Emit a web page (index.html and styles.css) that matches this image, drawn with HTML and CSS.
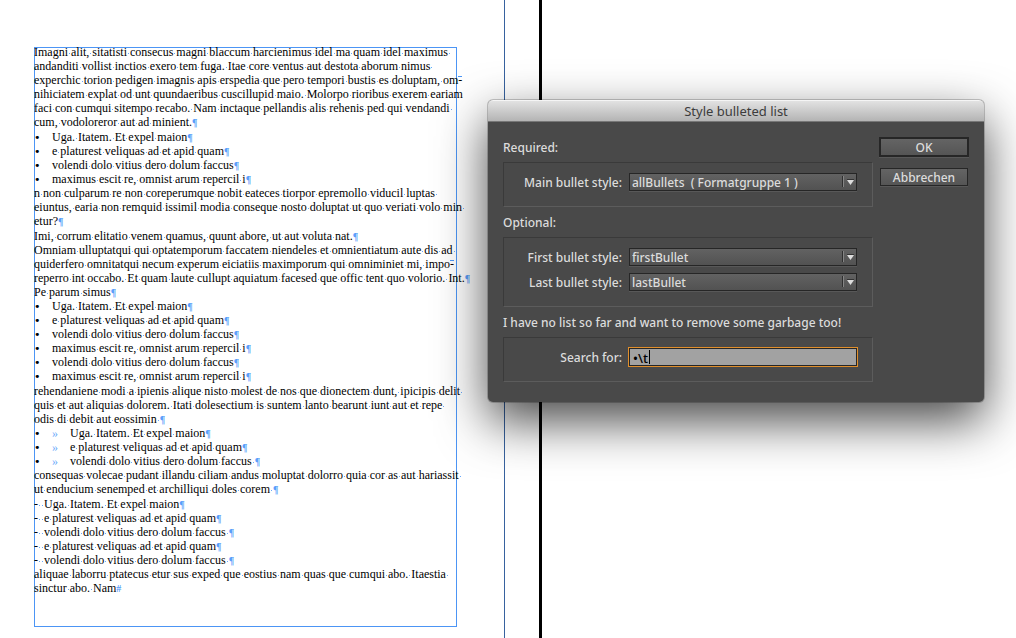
FILE: index.html
```html
<!DOCTYPE html>
<html lang="en">
<head>
<meta charset="utf-8">
<title>Style bulleted list</title>
<link rel="stylesheet" href="styles.css">
</head>
<body>
<main class="pasteboard">
<div class="page">
<article class="frame">
<section>
<p><span class="line">Imagni alit, sitatisti consecus magni blaccum harcienimus idel ma quam idel maximus </span>
<span class="line">andanditi vollist inctios exero tem fuga. Itae core ventus aut destota aborum nimus </span>
<span class="line">experchic torion pedigen imagnis apis erspedia que pero tempori bustis es doluptam, om<i class="hyphen">-</i></span>
<span class="line">nihiciatem explat od unt quundaeribus cuscillupid maio. Molorpo rioribus exerem eariam</span>
<span class="line">faci con cumqui sitempo recabo. Nam inctaque pellandis alis rehenis ped qui vendandi </span>
<span class="line">cum, vodoloreror aut ad minient.<b class="mark">¶</b></span></p>
</section>
<section>
<ul>
<li><span class="tab bullet">•</span>Uga. Itatem. Et expel maion<b class="mark">¶</b></li>
<li><span class="tab bullet">•</span>e platurest veliquas ad et apid quam<b class="mark">¶</b></li>
<li><span class="tab bullet">•</span>volendi dolo vitius dero dolum faccus<b class="mark">¶</b></li>
<li><span class="tab bullet">•</span>maximus escit re, omnist arum repercil i<b class="mark">¶</b></li>
</ul>
<p><span class="line">n non culparum re non coreperumque nobit eateces tiorpor epremollo viducil luptas </span>
<span class="line">eiuntus, earia non remquid issimil modia conseque nosto doluptat ut quo veriati volo min </span>
<span class="line">etur?<b class="mark">¶</b></span></p>
</section>
<section>
<p><span class="line">Imi, corrum elitatio venem quamus, quunt abore, ut aut voluta nat.<b class="mark">¶</b></span></p>
<p><span class="line">Omniam ulluptatqui qui optatemporum faccatem niendeles et omnientiatum aute dis ad </span>
<span class="line">quiderfero omnitatqui necum experum eiciatiis maximporum qui omniminiet mi, impo<i class="hyphen">-</i></span>
<span class="line">reperro int occabo. Et quam laute cullupt aquiatum facesed que offic tent quo volorio. Int.<b class="mark">¶</b></span></p>
<p><span class="line">Pe parum simus<b class="mark">¶</b></span></p>
<ul>
<li><span class="tab bullet">•</span>Uga. Itatem. Et expel maion<b class="mark">¶</b></li>
<li><span class="tab bullet">•</span>e platurest veliquas ad et apid quam<b class="mark">¶</b></li>
<li><span class="tab bullet">•</span>volendi dolo vitius dero dolum faccus<b class="mark">¶</b></li>
<li><span class="tab bullet">•</span>maximus escit re, omnist arum repercil i<b class="mark">¶</b></li>
<li><span class="tab bullet">•</span>volendi dolo vitius dero dolum faccus<b class="mark">¶</b></li>
<li><span class="tab bullet">•</span>maximus escit re, omnist arum repercil i<b class="mark">¶</b></li>
</ul>
</section>
<section>
<p><span class="line">rehendaniene modi a ipienis alique nisto molest de nos que dionectem dunt, ipicipis delit </span>
<span class="line">quis et aut aliquias dolorem. Itati dolesectium is suntem lanto bearunt iunt aut et repe </span>
<span class="line">odis di debit aut eossimin <b class="mark">¶</b></span></p>
<ul>
<li><span class="tab bullet">•</span><span class="tab arrows">»</span>Uga. Itatem. Et expel maion<b class="mark">¶</b></li>
<li><span class="tab bullet">•</span><span class="tab arrows">»</span>e platurest veliquas ad et apid quam<b class="mark">¶</b></li>
<li><span class="tab bullet">•</span><span class="tab arrows">»</span>volendi dolo vitius dero dolum faccus <b class="mark">¶</b></li>
</ul>
<p><span class="line">consequas volecae pudant illandu ciliam andus moluptat dolorro quia cor as aut hariassit </span>
<span class="line">ut enducium senemped et archilliqui doles corem <b class="mark">¶</b></span></p>
</section>
<section>
<ul>
<li>-  Uga. Itatem. Et expel maion<b class="mark">¶</b></li>
<li>-  e platurest veliquas ad et apid quam<b class="mark">¶</b></li>
<li>-  volendi dolo vitius dero dolum faccus <b class="mark">¶</b></li>
<li>-  e platurest veliquas ad et apid quam<b class="mark">¶</b></li>
<li>-  volendi dolo vitius dero dolum faccus <b class="mark">¶</b></li>
</ul>
<p><span class="line">aliquae laborru ptatecus etur sus exped que eostius nam quas que cumqui abo. Itaestia </span>
<span class="line">sinctur abo. Nam<b class="mark">#</b></span></p>
</section>
</article>
</div>
<div class="bleed"></div>

<form class="dialog" role="dialog" aria-labelledby="dialog-title">
<h1 class="titlebar" id="dialog-title">Style bulleted list</h1>
<div class="body">
<div class="settings">
<h2 class="heading">Required:</h2>
<div class="group">
<label for="main">Main bullet style:</label>
<span class="dropdown"><select id="main"><option>allBullets&nbsp; ( Formatgruppe 1 )</option></select><svg class="arrow" viewBox="0 0 14 12" aria-hidden="true"><path d="M.5 0v11" stroke="#303030"/><path d="M1.5 0v11" stroke="#858585"/><path d="M5 4h7L8.500 9z" fill="#ddd"/><path d="M5 3.500h7" stroke="#333"/></svg></span>
</div>
<h2 class="heading">Optional:</h2>
<div class="group">
<label for="first">First bullet style:</label>
<span class="dropdown"><select id="first"><option>firstBullet</option></select><svg class="arrow" viewBox="0 0 14 12" aria-hidden="true"><path d="M.5 0v11" stroke="#303030"/><path d="M1.5 0v11" stroke="#858585"/><path d="M5 4h7L8.500 9z" fill="#ddd"/><path d="M5 3.500h7" stroke="#333"/></svg></span>
<label for="last">Last bullet style:</label>
<span class="dropdown"><select id="last"><option>lastBullet</option></select><svg class="arrow" viewBox="0 0 14 12" aria-hidden="true"><path d="M.5 0v11" stroke="#303030"/><path d="M1.5 0v11" stroke="#858585"/><path d="M5 4h7L8.500 9z" fill="#ddd"/><path d="M5 3.500h7" stroke="#333"/></svg></span>
</div>
<h2 class="heading">I have no list so far and want to remove some garbage too!</h2>
<div class="group">
<label for="search">Search for:</label>
<span class="search"><input id="search" type="text" value="•\t"><span class="caret"></span></span>
</div>
</div>
<div class="actions">
<button class="default" type="button">OK</button>
<button type="button">Abbrechen</button>
</div>
</div>
</form>
</main>
<script src="script.js"></script>
</body>
</html>
```
FILE: styles.css
```css
* { box-sizing: border-box; }

body {
  margin: 0;
  background: #fff;
}

.pasteboard {
  position: relative;
  display: flex;
  min-height: 100vh;
  overflow: hidden;
}

.page {
  flex: none;
  padding: 47px 47px 11px 34px;
  border-right: 1px solid #37629f;
}

.bleed {
  flex: none;
  width: 37px;
  border-right: 3px solid #000;
}

/* Text frame */
.frame {
  display: flex;
  flex-direction: column;
  gap: 1px;
  width: 423px;
  min-height: 580px;
  box-shadow: inset 0 0 0 1px #4c95f5;
  color: #000;
  font: 12px/14px "Liberation Serif", serif;
}

.frame section:first-child { margin-top: -2px; }

.frame p,
.frame ul {
  margin: 0;
  padding: 0;
  list-style: none;
}

.frame .line,
.frame li {
  display: block;
  height: 14px;
  white-space: pre;
}

.tab {
  display: inline-block;
  width: 18px;
}

.bullet {
  font: 11px/1 "DejaVu Sans", sans-serif;
}

.arrows { color: #6aa8fa; }

.mark {
  color: #5a9ffa;
  font-weight: bold;
  font-size: 10px;
  line-height: 1;
}

/* Visible spaces */
.space {
  background: linear-gradient(#6aa8fa, #6aa8fa) 50% 8px / 1px 1px no-repeat;
}

.hyphen {
  font-style: normal;
  background: linear-gradient(#4c95f5, #4c95f5) 0 3px / 100% 1px no-repeat;
}

/* Dialog window */
.dialog {
  position: absolute;
  top: 100px;
  left: 488px;
  right: 32px;
  border-radius: 5px;
  background: #494949;
  box-shadow: 0 0 0 1px rgba(0, 0, 0, .2), 0 19px 50px rgba(0, 0, 0, .72);
  color: #dcdcdc;
  font: 500 12px/18px "Noto Sans", sans-serif;
}

.titlebar {
  margin: 0;
  height: 22px;
  border-top: 1px solid #f5f5f5;
  border-bottom: 1px solid #777;
  border-radius: 5px 5px 0 0;
  background: linear-gradient(#e2e2e2, #b4b4b4);
  color: #3c3c3c;
  font: 13px/21px "Noto Sans", sans-serif;
  text-align: center;
}

.body {
  display: flex;
  gap: 6px;
  padding: 10px 15px 20px;
}

.settings { flex: 1; }

.heading {
  margin: 0;
  padding-top: 2px;
  font: inherit;
  line-height: 28px;
  white-space: nowrap;
}

.group {
  display: grid;
  grid-template-columns: 118px 1fr;
  gap: 7px;
  padding: 10px 15px 15px 0;
  border: 1px solid;
  border-color: #3a3a3a #5c5c5c #5c5c5c #3a3a3a;
}

.group label {
  height: 18px;
  line-height: 20px;
  text-align: right;
  white-space: nowrap;
}

.dropdown,
.search {
  position: relative;
  display: flex;
}

select,
input,
button {
  margin: 0;
  border: 1px solid #262626;
  border-radius: 0;
  color: #dcdcdc;
  font: inherit;
}

select {
  appearance: none;
  width: 100%;
  height: 18px;
  padding: 1px 18px 0 2px;
  background: linear-gradient(#626262, #525252);
  box-shadow: 0 1px #585858;
  line-height: 16px;
}

.arrow {
  position: absolute;
  top: 3px;
  right: 1px;
  width: 14px;
  height: 12px;
  fill: none;
  pointer-events: none;
}

input {
  width: 100%;
  height: 18px;
  padding: 1px 3px 0;
  outline: 1px solid #e08f2c;
  background: #a2a2a2;
  color: #000;
  font-size: 13px;
}

.caret {
  position: absolute;
  top: 2px;
  left: 20px;
  width: 1px;
  height: 14px;
  background: #000;
}

.actions {
  display: flex;
  flex-direction: column;
  align-items: center;
  gap: 11px;
  width: 90px;
  padding-top: 5px;
}

button {
  width: 88px;
  height: 18px;
  padding: 1px 0 0;
  background: linear-gradient(#646464, #555);
  box-shadow: 0 1px #585858;
  line-height: 16px;
}

.default {
  width: 90px;
  height: 20px;
  border-width: 2px;
}
```
FILE: script.js
```js
// Wrap every space of the text frame so that it shows as a dot.
const frame = document.querySelector(".frame");
for (const line of frame.querySelectorAll(".line, li")) {
  for (const node of [...line.childNodes]) {
    if (node.nodeType !== Node.TEXT_NODE) continue;
    const parts = node.data.split(/( )/).filter(Boolean).map((part) => {
      if (part !== " ") return part;
      const space = document.createElement("span");
      space.className = "space";
      space.textContent = part;
      return space;
    });
    node.replaceWith(...parts);
  }
}
```
